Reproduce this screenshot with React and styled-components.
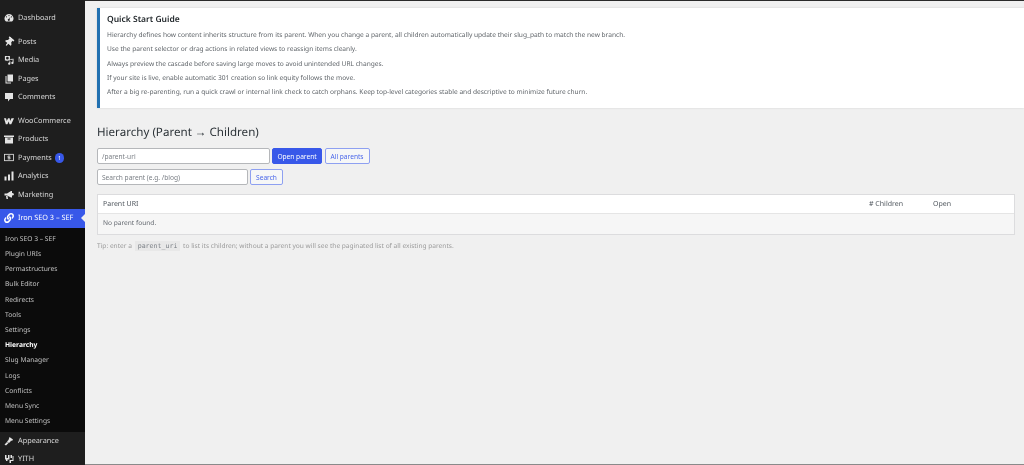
import React from 'react';
import styled, { createGlobalStyle } from 'styled-components';
import { FaThumbtack, FaLink } from 'react-icons/fa';

const GlobalStyle = createGlobalStyle`
  html, body {
    margin: 0;
    padding: 0;
    height: 100%;
    background: #f0f0f0;
    font-family: "Noto Sans", sans-serif;
    text-rendering: geometricPrecision;
    overflow: hidden;
  }
`;

const Page = styled.div`
  display: flex;
  width: 1024px;
  height: 465px;
  overflow: hidden;
  filter: blur(0.3px);
  will-change: transform;
`;

const Sidebar = styled.nav`
  width: 85px;
  height: 465px;
  flex: none;
  background: #1e1e1e;
  padding-top: 9px;
  box-sizing: border-box;
  overflow: hidden;
`;

const MenuGroup = styled.div`
  margin-bottom: ${(p) => p.$gap || 0}px;
`;

const MenuRow = styled.div`
  position: relative;
  display: flex;
  align-items: center;
  height: 18.5px;
  padding-left: 4px;
  gap: 4px;
  font-size: 7.3px;
  color: ${(p) => (p.$active ? '#ffffff' : '#d8d8d8')};
  background: ${(p) => (p.$active ? '#3858e9' : 'transparent')};
  white-space: nowrap;
`;

const IconBox = styled.span`
  width: 10px;
  height: 10px;
  flex: none;
  display: flex;
  align-items: center;
  justify-content: center;
  color: #e4e4e4;
  svg { display: block; }
`;

const Badge = styled.span`
  width: 9.5px;
  height: 9.5px;
  border-radius: 50%;
  background: #3858e9;
  color: #fff;
  font-size: 5.5px;
  display: flex;
  align-items: center;
  justify-content: center;
  margin-left: -1px;
`;

const ActiveArrow = styled.span`
  position: absolute;
  right: 0;
  top: 4.75px;
  border-style: solid;
  border-width: 4.5px 4.5px 4.5px 0;
  border-color: transparent #f0f0f0 transparent transparent;
`;

const Submenu = styled.div`
  background: #0b0b0b;
  padding: 3.4px 0;
`;

const SubItem = styled.div`
  height: 15.2px;
  line-height: 15.2px;
  padding-left: 5px;
  font-size: 6.7px;
  color: ${(p) => (p.$current ? '#ffffff' : '#c2c2c2')};
  font-weight: ${(p) => (p.$current ? 700 : 400)};
  white-space: nowrap;
`;

const Main = styled.main`
  flex: 1;
  min-width: 0;
  height: 465px;
  padding: 7px 0 0 12px;
  box-sizing: border-box;
  border-top: 1px solid #2a2a2a;
  border-bottom: 1px solid #8a8a8a;
`;

const Notice = styled.section`
  background: #fff;
  border-left: 3px solid #2271b1;
  box-shadow: 0 0 2px rgba(0, 0, 0, 0.12);
  height: 100px;
  box-sizing: border-box;
  padding: 6px 0 0 7px;
  color: #5f6469;
`;

const NoticeTitle = styled.h3`
  margin: 0 0 2px;
  font-size: 8.5px;
  line-height: 12px;
  font-weight: 600;
  color: #1d2327;
`;

const NoticeLine = styled.p`
  margin: 0;
  font-size: 6.6px;
  line-height: 14.3px;
  white-space: nowrap;
`;

const Heading = styled.h1`
  margin: 17px 0 8px;
  font-size: 11.6px;
  line-height: 15px;
  font-weight: 400;
  color: #2c3338;
`;

const FormRow = styled.div`
  display: flex;
  gap: ${(p) => p.$gap || 2}px;
  margin-bottom: 5px;
`;

const TextInput = styled.input`
  width: ${(p) => p.$width}px;
  height: 16px;
  box-sizing: border-box;
  border: 1px solid #b5b7ba;
  border-radius: 2px;
  background: #fff;
  padding: 0 4px;
  font-family: inherit;
  font-size: 6.6px;
  outline: none;
  &::placeholder { color: #7a7f85; opacity: 1; }
`;

const Button = styled.button`
  width: ${(p) => p.$width}px;
  height: 16px;
  box-sizing: border-box;
  padding: 0;
  border-radius: 2px;
  font-family: inherit;
  font-size: 6.6px;
  border: 1px solid ${(p) => (p.$primary ? '#3858e9' : '#8ea0f1')};
  background: ${(p) => (p.$primary ? '#3858e9' : '#f6f7f7')};
  color: ${(p) => (p.$primary ? '#fff' : '#4a67ea')};
`;

const Table = styled.div`
  width: 918px;
  margin-top: 9px;
  border: 1px solid #dcdcde;
  box-sizing: border-box;
`;

const TableHead = styled.div`
  display: grid;
  grid-template-columns: 766px 64px 1fr;
  background: #fff;
  height: 19px;
  box-sizing: border-box;
  padding: 1px 0 0 5px;
  align-items: center;
  font-size: 7px;
  color: #50575e;
  border-bottom: 1px solid #e5e5e5;
`;

const TableEmpty = styled.div`
  background: #f6f6f6;
  height: 20px;
  line-height: 18px;
  padding-left: 5px;
  font-size: 6.6px;
  color: #646970;
`;

const Tip = styled.p`
  margin: 6px 0 0;
  font-size: 6.6px;
  line-height: 10px;
  color: #9a9a9a;
  white-space: nowrap;
`;

const Code = styled.code`
  font-family: "DejaVu Sans Mono", monospace;
  font-size: 6.6px;
  background: #e8e8e8;
  color: #7a7f85;
  padding: 1px 3px;
  margin: 0 1px;
`;

const DashIcon = () => (
  <svg width="10" height="10" viewBox="0 0 20 20" fill="currentColor"><path d="M10 2a9 9 0 0 0-8 13l2 2h12l2-2A9 9 0 0 0 10 2zm0 2a1.2 1.2 0 1 1 0 2.400A1.200 1.200 0 0 1 10 4zM5 6.500a1.200 1.200 0 1 1 0 2.400 1.200 1.200 0 0 1 0-2.400zm10 0a1.200 1.200 0 1 1 0 2.400 1.200 1.200 0 0 1 0-2.400zM13.500 7l-2.700 5.100a2 2 0 1 1-1.700-.3z" fillRule="evenodd" /></svg>
);
const MediaIcon = () => (
  <svg width="11" height="10" viewBox="0 0 22 20" fill="currentColor"><path d="M2 1h11v10H8l-1 2-2-2H2zm5.500 2a3 3 0 1 0 0 6 3 3 0 0 0 0-6z" fillRule="evenodd" /><path d="M21 7v9.500a2.500 2.500 0 1 1-2-2.400V9l-5 1.200V18a2.500 2.500 0 1 1-2-2.400V13h2V8z" /></svg>
);
const PagesIcon = () => (
  <svg width="10" height="10" viewBox="0 0 20 20" fill="currentColor"><path d="M7 1h11v14H7z" /><path d="M5 4v13h9v2H3V4z" /></svg>
);
const CommentIcon = () => (
  <svg width="10" height="10" viewBox="0 0 20 20" fill="currentColor"><path d="M2 2h16v12h-6l-4 5v-5H2z" /></svg>
);
const WooIcon = () => (
  <svg width="11" height="8" viewBox="0 0 22 14" fill="currentColor"><path d="M0 1h4.500l1.500 6L9 1h3.500l1 6 3-6h5.500l-6 13h-4L10.500 8 7.500 14h-3.500z" /></svg>
);
const ProductsIcon = () => (
  <svg width="10" height="9" viewBox="0 0 20 18" fill="currentColor"><path d="M0 1h20v3H0z" /><path d="M2 5h16v12H2zm5 2v2h6V7z" fillRule="evenodd" /></svg>
);
const PaymentsIcon = () => (
  <svg width="11" height="9" viewBox="0 0 22 18"><rect x="1" y="2" width="20" height="14" fill="none" stroke="currentColor" strokeWidth="1.800" /><path d="M14 6h-5.500v3h5v3H8M11 4.500v9" fill="none" stroke="currentColor" strokeWidth="1.500" /></svg>
);
const AnalyticsIcon = () => (
  <svg width="10" height="10" viewBox="0 0 20 20" fill="currentColor"><path d="M1 11h4v8H1zM8 7h4v12H8zM15 1h4v18h-4z" /></svg>
);
const MarketingIcon = () => (
  <svg width="10" height="10" viewBox="0 0 20 20" fill="currentColor"><path d="M1 7h5l8-5h2v13h-2L6 11v0H1z" /><path d="M4 12h3l1 6H5z" /><circle cx="17" cy="8.500" r="2.500" /></svg>
);
const AppearanceIcon = () => (
  <svg width="10" height="10" viewBox="0 0 20 20" fill="currentColor"><path d="M11 2l7 5-2 3-2-1-1 2-3 3-4-3 3-3 1-3zM6 12l3 2-5 5-3-2z" /></svg>
);
const YithIcon = () => (
  <svg width="10" height="10" viewBox="0 0 20 20" fill="currentColor"><path d="M2 2h3v6h3V2h3v9H7v3H4v-3H2zM13 2h3v6h-3zM17 4h2v10h-5v4h-3v-6h6z" /></svg>
);

const groupOne = [
  { label: 'Posts', icon: <FaThumbtack size={10} style={{ transform: 'rotate(40deg)' }} /> },
  { label: 'Media', icon: <MediaIcon /> },
  { label: 'Pages', icon: <PagesIcon /> },
  { label: 'Comments', icon: <CommentIcon /> },
];

const groupTwo = [
  { label: 'WooCommerce', icon: <WooIcon /> },
  { label: 'Products', icon: <ProductsIcon /> },
  { label: 'Payments', icon: <PaymentsIcon />, badge: 1 },
  { label: 'Analytics', icon: <AnalyticsIcon /> },
  { label: 'Marketing', icon: <MarketingIcon /> },
];

const subItems = [
  'Iron SEO 3 – SEF',
  'Plugin URIs',
  'Permastructures',
  'Bulk Editor',
  'Redirects',
  'Tools',
  'Settings',
  'Hierarchy',
  'Slug Manager',
  'Logs',
  'Conflicts',
  'Menu Sync',
  'Menu Settings',
];

const guideLines = [
  'Hierarchy defines how content inherits structure from its parent. When you change a parent, all children automatically update their slug_path to match the new branch.',
  'Use the parent selector or drag actions in related views to reassign items cleanly.',
  'Always preview the cascade before saving large moves to avoid unintended URL changes.',
  'If your site is live, enable automatic 301 creation so link equity follows the move.',
  'After a big re-parenting, run a quick crawl or internal link check to catch orphans. Keep top-level categories stable and descriptive to minimize future churn.',
];

const Item = ({ item }) => (
  <MenuRow>
    <IconBox>{item.icon}</IconBox>
    {item.label}
    {item.badge && <Badge>{item.badge}</Badge>}
  </MenuRow>
);

const App = () => (
  <Page>
    <GlobalStyle />
    <Sidebar>
      <MenuGroup $gap={5}>
        <Item item={{ label: 'Dashboard', icon: <DashIcon /> }} />
      </MenuGroup>
      <MenuGroup $gap={5}>
        {groupOne.map((item) => <Item key={item.label} item={item} />)}
      </MenuGroup>
      <MenuGroup $gap={5}>
        {groupTwo.map((item) => <Item key={item.label} item={item} />)}
      </MenuGroup>
      <MenuRow $active>
        <IconBox><FaLink size={10} color="#fff" /></IconBox>
        Iron SEO 3 – SEF
        <ActiveArrow />
      </MenuRow>
      <Submenu>
        {subItems.map((label) => (
          <SubItem key={label} $current={label === 'Hierarchy'}>{label}</SubItem>
        ))}
      </Submenu>
      <Item item={{ label: 'Appearance', icon: <AppearanceIcon /> }} />
      <Item item={{ label: 'YITH', icon: <YithIcon /> }} />
    </Sidebar>
    <Main>
      <Notice>
        <NoticeTitle>Quick Start Guide</NoticeTitle>
        {guideLines.map((line) => <NoticeLine key={line}>{line}</NoticeLine>)}
      </Notice>
      <Heading>Hierarchy (Parent → Children)</Heading>
      <FormRow $gap={2.5}>
        <TextInput $width={172.5} placeholder="/parent-uri" />
        <Button $primary $width={50}>Open parent</Button>
        <Button $width={45}>All parents</Button>
      </FormRow>
      <FormRow>
        <TextInput $width={151} placeholder="Search parent (e.g. /blog)" />
        <Button $width={33}>Search</Button>
      </FormRow>
      <Table>
        <TableHead>
          <span>Parent URI</span>
          <span># Children</span>
          <span>Open</span>
        </TableHead>
        <TableEmpty>No parent found.</TableEmpty>
      </Table>
      <Tip>
        Tip: enter a <Code>parent_uri</Code> to list its children; without a parent you will see the paginated list of all existing parents.
      </Tip>
    </Main>
  </Page>
);

export default App;
